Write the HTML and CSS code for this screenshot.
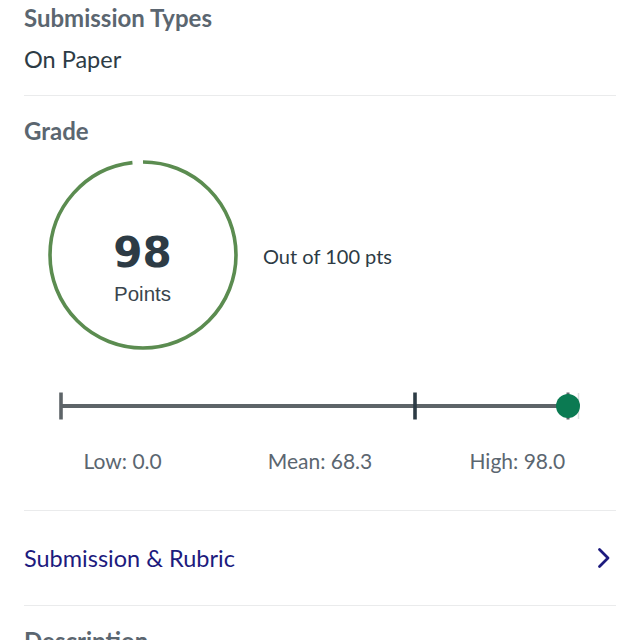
FILE: index.html
```html
<!DOCTYPE html>
<html>
<head>
<meta charset="utf-8">
<link rel="stylesheet" href="styles.css">
</head>
<body>
<div class="page">
  <section class="section first">
    <div class="label">Submission Types</div>
    <div class="value">On Paper</div>
  </section>
  <section class="section grade">
    <div class="label">Grade</div>
    <div class="grade-row">
      <div class="ring">
        <svg width="190" height="190" viewBox="0 0 190 190">
          <circle cx="95" cy="95" r="93" fill="none" stroke="#5b8c50" stroke-width="3.6"
            stroke-dasharray="572.7 11.6" transform="rotate(-90 95 95)"/>
        </svg>
        <div class="ring-text">
          <div class="score">98</div>
          <div class="points">Points</div>
        </div>
      </div>
      <div class="outof">Out of 100 pts</div>
    </div>
    <div class="slider">
      <svg width="592" height="30" viewBox="0 0 592 30">
        <line x1="37" y1="15" x2="544" y2="15" stroke="#5d6468" stroke-width="3.8"/>
        <line x1="37" y1="1.5" x2="37" y2="28.5" stroke="#5d6468" stroke-width="3.6"/>
        <line x1="391" y1="1.5" x2="391" y2="28.5" stroke="#2d3b45" stroke-width="3.6"/>
        <line x1="544" y1="1.5" x2="544" y2="28.5" stroke="#5d6468" stroke-width="3"/>
        <line x1="554.5" y1="2" x2="554.5" y2="28" stroke="#dcdedf" stroke-width="1.5"/>
        <circle cx="544" cy="15" r="12" fill="#0b7a52"/>
      </svg>
    </div>
    <div class="stats">
      <div class="stat">Low: 0.0</div>
      <div class="stat">Mean: 68.3</div>
      <div class="stat">High: 98.0</div>
    </div>
  </section>
  <section class="section link-row">
    <div class="link">Submission &amp; Rubric</div>
    <svg class="chevron" width="14" height="22" viewBox="0 0 14 22">
      <path d="M2.5 2.5 L11 11 L2.5 19.5" fill="none" stroke="#1d1b7e" stroke-width="2.8" stroke-linecap="round" stroke-linejoin="round"/>
    </svg>
  </section>
  <section class="section last">
    <div class="label">Description</div>
  </section>
</div>
</body>
</html>
```
FILE: styles.css
```css
html, body {
  margin: 0;
  padding: 0;
  background: #ffffff;
}
body {
  font-family: Lato, "Noto Sans", sans-serif;
  color: #2d3b45;
  overflow: hidden;
  height: 640px;
}
.page {
  padding: 0 24px;
}
.section {
  border-bottom: 1.5px solid #eaebec;
}
.first {
  padding-top: 4px;
  height: 96px;
  box-sizing: border-box;
}
.label {
  font-size: 24px;
  font-weight: 700;
  color: #5b6670;
  line-height: 28px;
}
.value {
  font-size: 23.5px;
  line-height: 28px;
  margin-top: 13px;
  color: #2d3b45;
}
.grade {
  padding-top: 21px;
  padding-bottom: 37px;
}
.grade-row {
  display: flex;
  align-items: center;
  margin-top: 15px;
}
.ring {
  position: relative;
  width: 190px;
  height: 190px;
  margin-left: 23.5px;
}
.ring svg {
  display: block;
}
.ring-text {
  position: absolute;
  inset: 0;
  display: flex;
  flex-direction: column;
  align-items: center;
  padding-top: 71.5px;
}
.score {
  font-family: "DejaVu Sans", sans-serif;
  font-weight: 700;
  font-size: 42px;
  line-height: 42px;
  color: #2d3b45;
}
.points {
  font-family: "Liberation Sans", Arial, sans-serif;
  font-size: 20.5px;
  line-height: 24px;
  margin-top: 8px;
  color: #3a454d;
}
.outof {
  margin-left: 25.5px;
  font-size: 20px;
  line-height: 24px;
  color: #2d3b45;
  margin-top: 2px;
}
.slider {
  margin-top: 41px;
}
.slider svg {
  display: block;
}
.stats {
  display: grid;
  grid-template-columns: 1fr 1fr 1fr;
  margin-top: 27.5px;
}
.stat {
  text-align: center;
  font-size: 21px;
  line-height: 24px;
  color: #5b6670;
}
.link-row {
  display: flex;
  align-items: center;
  justify-content: space-between;
  height: 95.5px;
  box-sizing: border-box;
}
.link {
  font-size: 23.5px;
  color: #1d1b7e;
}
.chevron {
  margin-right: 5px;
}
.last {
  border-bottom: none;
  padding-top: 21px;
}
```
